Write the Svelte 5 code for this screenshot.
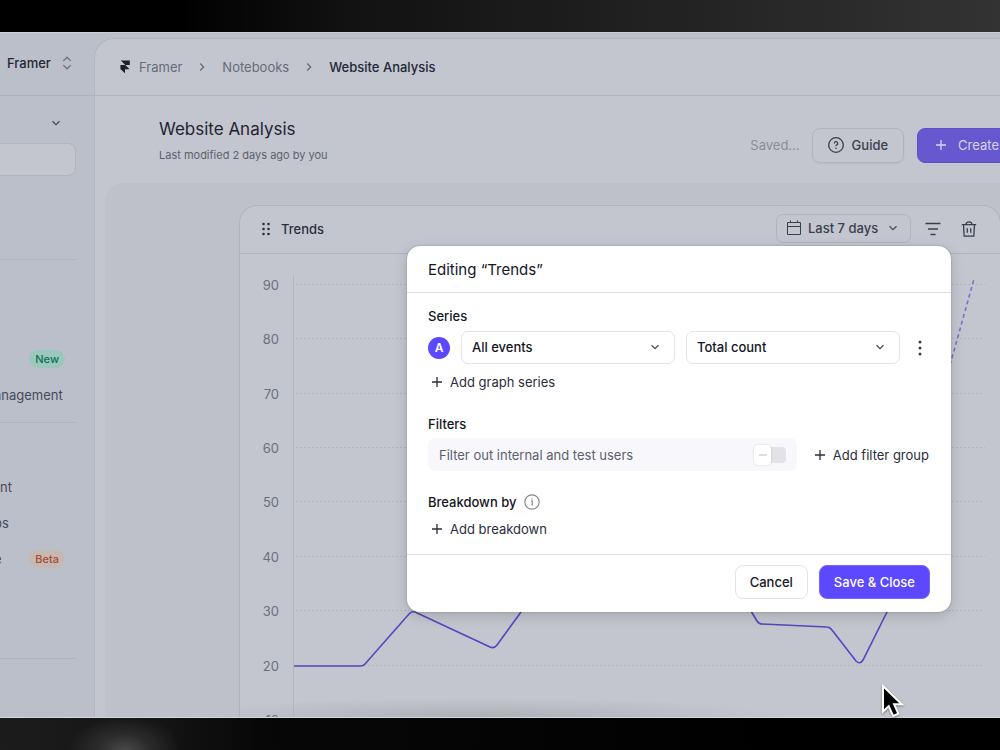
<script lang="ts">
  const crumbs = ['Framer', 'Notebooks'];
  const eventOptions = ['All events'];
  const countOptions = ['Total count'];
  const ranges = ['Last 7 days'];

  let event = $state('All events');
  let count = $state('Total count');
  let range = $state('Last 7 days');
  let hideInternal = $state(false);
  let search = $state('');

  // y axis goes 90, 80, 70 ... 10
  const ticks = [90, 80, 70, 60, 50, 40, 30, 20, 10].map((value, i) => ({
    value,
    y: Math.round(30.8 + i * 54.4),
  }));
</script>

{#snippet chevron()}
  <svg class="chevron" width="10" height="10" viewBox="0 0 10 10" aria-hidden="true">
    <path d="M1.5 3.2 5 6.7l3.5-3.5" />
  </svg>
{/snippet}

{#snippet plus()}
  <svg class="plus" width="10" height="10" viewBox="0 0 10 10" aria-hidden="true">
    <path d="M5 0v10M0 5h10" />
  </svg>
{/snippet}

<div class="stage">
  <div class="app">
    <aside>
      <button class="workspace">
        Framer
        <svg width="10" height="14" viewBox="0 0 10 14" aria-hidden="true">
          <path d="M1.3 4.9 5 1.2l3.7 3.7M1.3 9.1 5 12.8l3.7-3.7" />
        </svg>
      </button>
      <nav>
        <div class="project">
          <button aria-label="Project">{@render chevron()}</button>
          <input type="text" aria-label="Search" bind:value={search} />
        </div>
        <ul class="group first">
          <li><span class="badge new">New</span></li>
          <li><a class="cut" href="#management">anagement</a></li>
        </ul>
        <ul class="group second">
          <li><a href="#nt">nt</a></li>
          <li><a class="cut" href="#ps">ps</a></li>
          <li><a class="cut" href="#e">e</a><span class="badge beta">Beta</span></li>
        </ul>
      </nav>
    </aside>

    <main>
      <header>
        <svg class="logo" width="10" height="14" viewBox="0 0 10 14" aria-hidden="true">
          <path d="M.8.6h9v4.5H5.3zM.4 5.1h4.9l4.3 4.2H5v4L.4 8.9z" />
        </svg>
        {#each crumbs as crumb}
          <a href="#{crumb}">{crumb}</a>
          <svg class="next" width="6" height="10" viewBox="0 0 6 10" aria-hidden="true">
            <path d="M1.2 1.5 4.7 5 1.2 8.5" />
          </svg>
        {/each}
        <span class="current">Website Analysis</span>
      </header>

      <section class="page-head">
        <div class="titles">
          <h1>Website Analysis</h1>
          <p>Last modified 2 days ago by you</p>
        </div>
        <span class="saved">Saved...</span>
        <button class="guide">
          <svg width="16" height="16" viewBox="0 0 16 16" aria-hidden="true">
            <circle cx="8" cy="8" r="7.3" />
            <path d="M6.3 6.4a1.7 1.7 0 1 1 2.5 1.5c-.6.3-.8.6-.8 1.2" />
            <circle class="dot" cx="8" cy="11.2" r=".8" />
          </svg>
          Guide
        </button>
        <button class="create">{@render plus()} Create</button>
      </section>

      <section class="canvas">
        <article class="card">
          <div class="card-head">
            <svg class="grip" width="8" height="14" viewBox="0 0 8 14" aria-hidden="true">
              {#each [2, 7, 12] as y}
                <circle cx="1.5" cy={y} r="1.3" />
                <circle cx="6.5" cy={y} r="1.3" />
              {/each}
            </svg>
            <h2>Trends</h2>
            <div class="select range">
              <svg class="calendar" width="16" height="16" viewBox="0 0 16 16" aria-hidden="true">
                <path d="M1.5 2.5h13v12h-13zM1.5 6.5h13M4.5.5v2M11.5.5v2" />
              </svg>
              <select aria-label="Date range" bind:value={range}>
                {#each ranges as option}<option>{option}</option>{/each}
              </select>
              {@render chevron()}
            </div>
            <button class="icon" aria-label="Filter">
              <svg width="16" height="14" viewBox="0 0 16 14" aria-hidden="true">
                <path d="M.5 1.5h15M3 7h10M5.5 12.5h5" />
              </svg>
            </button>
            <button class="icon" aria-label="Delete">
              <svg width="16" height="16" viewBox="0 0 16 16" aria-hidden="true">
                <path d="M.8 3.7h14.4M2.5 3.7l.7 11.5h9.6l.7-11.5M5 3.7C5 1.8 6.2.8 8 .8s3 1 3 2.9M6.3 7.2v4.6M9.7 7.2v4.6" />
              </svg>
            </button>
          </div>
          <svg class="chart" width="100%" height="463" role="img" aria-label="Trends">
            {#each ticks as tick}
              <text x="39" y={tick.y + 5} text-anchor="end">{tick.value}</text>
              <line class="grid" x1="56" x2="98%" y1={tick.y - 0.5} y2={tick.y - 0.5} />
            {/each}
            <line class="axis" x1="53.5" x2="53.5" y1="22" y2="463" />
            <path
              class="line"
              d="M54 412H121q2 0 4-2L169 360q3-3 6-2L250 393q4 2 7-2L281 358 295 338M505 347 517 367q2 3 5 3L587 373q3 0 5 3L616 407q4 4 7-1L647 358 653 346"
            />
            <path class="line forecast" d="M710 111 734 25" />
          </svg>
        </article>
      </section>
    </main>
  </div>

  <div class="modal" role="dialog" aria-labelledby="modal-title">
    <h2 id="modal-title">Editing “Trends”</h2>

    <div class="modal-body">
      <h3>Series</h3>
      <div class="series">
        <span class="letter">A</span>
        <div class="select">
          <select aria-label="Event" bind:value={event}>
            {#each eventOptions as option}<option>{option}</option>{/each}
          </select>
          {@render chevron()}
        </div>
        <div class="select">
          <select aria-label="Aggregation" bind:value={count}>
            {#each countOptions as option}<option>{option}</option>{/each}
          </select>
          {@render chevron()}
        </div>
        <button class="more" aria-label="More">
          <svg width="4" height="16" viewBox="0 0 4 16" aria-hidden="true">
            <circle cx="2" cy="2" r="1.5" />
            <circle cx="2" cy="8" r="1.5" />
            <circle cx="2" cy="14" r="1.5" />
          </svg>
        </button>
      </div>
      <button class="add">{@render plus()} Add graph series</button>

      <h3 class="spaced">Filters</h3>
      <div class="filters">
        <label>
          Filter out internal and test users
          <input type="checkbox" bind:checked={hideInternal} />
        </label>
        <button class="add">{@render plus()} Add filter group</button>
      </div>

      <h3 class="breakdown">
        Breakdown by
        <svg class="info" width="16" height="16" viewBox="0 0 16 16" aria-hidden="true">
          <circle cx="8" cy="8" r="7.2" />
          <path d="M7 7h1.2v4.5M8 4.3v1.2" />
        </svg>
      </h3>
      <button class="add">{@render plus()} Add breakdown</button>
    </div>

    <footer>
      <button class="cancel">Cancel</button>
      <button class="save">Save &amp; Close</button>
    </footer>
  </div>

  <svg class="cursor" width="24" height="36" viewBox="0 0 24 36" aria-hidden="true">
    <path d="M2 2v25.5l5.7-5.3 4.4 9.8 5.2-2.3-4.2-9.5h7.600z" />
  </svg>
</div>

<style>
  :global(body) {
    background: #000;
  }

  .stage {
    position: relative;
    box-sizing: border-box;
    height: 100vh;
    padding: 32px 0;
    overflow: hidden;
    background:
      radial-gradient(ellipse 56px 34px at 125px 100%, #ffffff38, #ffffff18 45%, transparent) bottom / 100% 32px no-repeat,
      linear-gradient(90deg, #1c1c1c, #141414 16%, #070707 26%, #000 80%) bottom / 100% 33px no-repeat,
      linear-gradient(90deg, #000 18%, #111 34%, #333) top / 100% 32px no-repeat,
      #000;
    font-family: Inter, 'Liberation Sans', sans-serif;
    font-size: 13px;
    line-height: 20px;
    color: #2a2f3e;
  }

  button,
  input,
  select {
    box-sizing: border-box;
    margin: 0;
    padding: 0;
    border: 0;
    background: none;
    font: inherit;
    color: inherit;
  }

  h1,
  h2,
  h3,
  p,
  ul {
    margin: 0;
    padding: 0;
    font-size: 13px;
    font-weight: 400;
    list-style: none;
  }

  a {
    color: inherit;
    text-decoration: none;
  }

  svg {
    flex: none;
    fill: none;
    stroke: currentColor;
    stroke-width: 1.3;
  }

  .app {
    display: flex;
    box-sizing: border-box;
    height: 100%;
    overflow: hidden;
    border-top: 1px solid #cdcfd6;
    border-bottom: 1px solid #d4d8da;
    background: #bbbfc9;
  }

  aside {
    box-sizing: border-box;
    width: 94px;
    flex: none;
    color: #464b5a;
  }

  .workspace {
    display: flex;
    align-items: center;
    gap: 11px;
    width: 100%;
    height: 63px;
    padding: 0 0 2px 7px;
    border-bottom: 1px solid #b0b3bd;
    font-weight: 500;
    color: #222737;
  }

  .workspace svg {
    color: #6a6f7d;
  }

  nav {
    padding-right: 18px;
  }

  .project {
    display: grid;
    height: 163px;
    align-content: start;
    justify-items: end;
    border-bottom: 1px solid #b0b4bd;
  }

  .project button {
    display: grid;
    place-items: center;
    width: 40px;
    height: 47px;
    padding-top: 7px;
  }

  .project input {
    width: 100%;
    height: 33px;
    border: 1px solid #b1b5be;
    border-left: 0;
    border-radius: 0 8px 8px 0;
    background: #c3c6ce;
  }

  .group {
    border-bottom: 1px solid #b0b4bd;
  }

  .group.first {
    padding: 81px 0 9px;
  }

  .group.second {
    padding: 46px 0 81px;
  }

  .group li {
    display: flex;
    align-items: center;
    height: 36px;
  }

  .cut {
    margin-left: -6px;
  }

  .badge {
    margin: 0 11px 0 auto;
    padding: 0 6px;
    border-radius: 9px;
    font-size: 11px;
    font-weight: 500;
    line-height: 18px;
  }

  .new {
    background: #9cc7bd;
    color: #087158;
  }

  .beta {
    background: #c6b9b4;
    color: #a94a32;
  }

  main {
    flex: 1;
    min-width: 0;
    display: flex;
    flex-direction: column;
    margin-top: 5px;
    border: 1px solid #b3b6bf;
    border-width: 1px 0 0 1px;
    border-radius: 20px 0 0 0;
    background: #c3c6ce;
  }

  header {
    display: flex;
    align-items: center;
    gap: 17px;
    height: 56px;
    padding-left: 25px;
    border-bottom: 1px solid #b0b3bc;
    color: #666b7a;
  }

  .logo {
    margin-right: -8px;
    fill: #1b1f29;
    stroke: none;
  }

  .current {
    font-weight: 500;
    color: #222737;
  }

  .page-head {
    display: flex;
    align-items: center;
    height: 87px;
    box-sizing: border-box;
    padding: 11px 0 0 64px;
  }

  .titles {
    flex: 1;
    padding-bottom: 9px;
  }

  h1 {
    font-size: 17px;
    line-height: 24px;
    color: #1e2332;
  }

  .titles p {
    margin-top: 4px;
    font-size: 11px;
    color: #5c6170;
  }

  .saved {
    margin-right: 12px;
    color: #8a8e9a;
  }

  .guide,
  .create {
    display: flex;
    align-items: center;
    height: 35px;
    border: 1px solid #b1b4bd;
    border-radius: 8px;
  }

  .guide {
    gap: 8px;
    margin-right: 13px;
    padding: 0 15px;
    box-shadow: 0 1px 2px #0000000d;
    font-weight: 500;
    color: #3a3f4e;
  }

  .guide .dot {
    fill: currentColor;
    stroke: none;
  }

  .create {
    gap: 12px;
    margin-right: -18px;
    padding: 0 18px;
    border-color: #5f50ca;
    background: #6758cf;
    color: #d6d5ec;
  }

  .canvas {
    flex: 1;
    margin-left: 10px;
    padding: 22px 0 0 134px;
    border-radius: 18px 0 0 0;
    background: #bec1c9;
  }

  .card {
    margin-right: -1px;
    overflow: hidden;
    border: 1px solid #b0b3bc;
    border-bottom: 0;
    border-radius: 18px 18px 0 0;
    background: #c3c6ce;
  }

  .card-head {
    display: flex;
    align-items: center;
    box-sizing: border-box;
    height: 48px;
    padding: 0 23px 2px 22px;
    border-bottom: 1px solid #b0b3bc;
  }

  .grip {
    fill: #2a2f3e;
    stroke: none;
  }

  .card-head h2 {
    flex: 1;
    margin-left: 11px;
    font-weight: 500;
  }

  .icon {
    display: grid;
    place-items: center;
    width: 16px;
    height: 30px;
    margin-left: 20px;
    color: #3a3f4e;
  }

  .range + .icon {
    margin-left: 14px;
  }

  .select {
    position: relative;
    flex: 1;
    color: #14161f;
  }

  .select select {
    display: block;
    appearance: none;
    width: 100%;
    height: 33px;
    padding: 0 30px 1px 10px;
    border: 1px solid #e3e3e8;
    border-radius: 7px;
    font-weight: 500;
  }

  .select .chevron {
    position: absolute;
    top: 11px;
    right: 15px;
    color: #4a4d5a;
    pointer-events: none;
  }

  .select.range {
    flex: none;
    width: 135px;
    color: #3a3f4e;
  }

  .range select {
    height: 29px;
    padding-left: 31px;
    border-color: #b1b4bd;
  }

  .range .chevron {
    top: 9px;
    right: 13px;
  }

  .calendar {
    position: absolute;
    top: 6px;
    left: 10px;
    stroke-width: 1;
  }

  .chart {
    display: block;
    background: radial-gradient(ellipse 300px 20px at 240px 100%, #0000001c, transparent);
  }

  .chart text {
    fill: #6b6f7d;
    stroke: none;
  }

  .grid {
    stroke: #b2b5bd;
    stroke-width: 1;
    stroke-dasharray: 2 2;
  }

  .axis {
    stroke: #b1b4bd;
    stroke-width: 1;
  }

  .line {
    stroke: #5347c0;
    stroke-width: 1.6;
  }

  .forecast {
    stroke: #7a71cc;
    stroke-dasharray: 4 3;
  }

  .modal {
    position: absolute;
    top: 246px;
    right: 49px;
    width: 544px;
    border-radius: 13px;
    background: #fff;
    box-shadow:
      0 0 2px #00000040,
      0 4px 14px #00000026;
    color: #14161f;
  }

  .modal > h2 {
    padding: 13px 21px 11px;
    border-bottom: 1px solid #e1e1e4;
    font-size: 15px;
    line-height: 22px;
  }

  .modal-body {
    padding: 13px 22px 15px 21px;
  }

  h3 {
    display: flex;
    align-items: center;
    gap: 8px;
    font-weight: 500;
  }

  h3.spaced {
    margin-top: 22px;
  }

  h3.breakdown {
    margin-bottom: 7px;
  }

  .series {
    display: flex;
    align-items: center;
    gap: 11px;
    margin: 5px 0 8px;
  }

  .letter {
    width: 22px;
    border-radius: 50%;
    background: #5b48ff;
    font-size: 12px;
    font-weight: 600;
    line-height: 22px;
    text-align: center;
    color: #fff;
  }

  .more {
    display: grid;
    place-items: center;
    width: 18px;
    height: 30px;
  }

  .more svg {
    fill: #3a3f4e;
    stroke: none;
  }

  .add {
    display: flex;
    align-items: center;
    gap: 8px;
    padding-left: 4px;
    color: #2a2d3b;
  }

  .filters {
    display: flex;
    align-items: center;
    gap: 14px;
    margin: 4px 0 21px;
  }

  .filters label {
    flex: 1;
    display: flex;
    align-items: center;
    justify-content: space-between;
    height: 33px;
    padding: 0 11px;
    border-radius: 7px;
    background: #f8f8fc;
    color: #5d5f6c;
  }

  .filters input {
    appearance: none;
    position: relative;
    width: 27px;
    height: 16px;
    border-radius: 4px;
    background: #e3e2e8;
  }

  .filters input::before {
    content: '';
    position: absolute;
    top: -2px;
    left: -5px;
    width: 17px;
    height: 20px;
    border-radius: 4px;
    background: #fff;
    box-shadow: 0 0 2px #00000030;
  }

  .filters input::after {
    content: '';
    position: absolute;
    top: 7px;
    left: 0;
    width: 8px;
    height: 2px;
    background: #dddce2;
  }

  .info {
    color: #85858f;
    stroke-width: 1.2;
  }

  footer {
    display: flex;
    justify-content: flex-end;
    gap: 11px;
    padding: 10px 21px 13px;
    border-top: 1px solid #e1e1e4;
  }

  footer button {
    height: 34px;
    padding: 0 14px;
    border: 1px solid #e3e3e8;
    border-radius: 8px;
    font-weight: 500;
  }

  .save {
    border-color: #7767ff;
    background: #5b48ff;
    color: #fff;
  }

  .cursor {
    position: absolute;
    top: 684px;
    left: 881px;
    fill: #000;
    stroke: #fff;
    stroke-width: 2;
    filter: drop-shadow(0 1px 1px #00000066);
  }
</style>
